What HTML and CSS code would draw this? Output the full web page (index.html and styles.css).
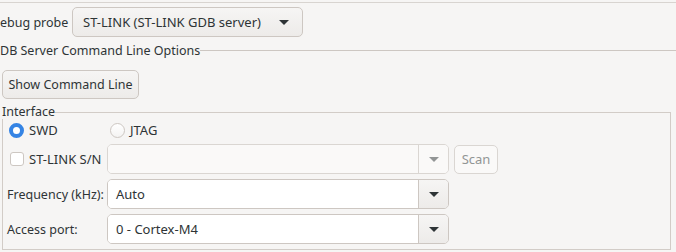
FILE: index.html
```html
<!DOCTYPE html>
<html lang="en">
<head>
<meta charset="utf-8"/>
<title>Debugger</title>
<link rel="stylesheet" href="styles.css">
</head>
<body>
<div class="panel">
  <div class="probe-row">
    <span class="label probe-label">ebug probe</span>
    <div class="combo probe-combo">
      <span class="combo-text">ST-LINK (ST-LINK GDB server)</span>
      <span class="arrow"></span>
    </div>
  </div>
  <div class="section-title"><span>DB Server Command Line Options</span></div>
  <button class="btn show-btn">Show Command Line</button>
  <fieldset class="group">
    <legend>Interface</legend>
    <div class="radio-row">
      <label class="radio checked"><span class="dot"></span>SWD</label>
      <label class="radio"><span class="dot"></span>JTAG</label>
    </div>
    <div class="form-row sn-row">
      <label class="check"><span class="box"></span>ST-LINK S/N</label>
      <div class="entry-combo disabled">
        <span class="entry"></span>
        <span class="drop"><span class="arrow"></span></span>
      </div>
      <button class="btn scan-btn" disabled>Scan</button>
    </div>
    <div class="form-row">
      <span class="label field-label">Frequency (kHz):</span>
      <div class="entry-combo">
        <span class="entry">Auto</span>
        <span class="drop"><span class="arrow"></span></span>
      </div>
    </div>
    <div class="form-row">
      <span class="label field-label">Access port:</span>
      <div class="entry-combo">
        <span class="entry">0 - Cortex-M4</span>
        <span class="drop"><span class="arrow"></span></span>
      </div>
    </div>
  </fieldset>
</div>
</body>
</html>
```

FILE: styles.css
```css
body {
  margin: 0;
  padding: 0;
  background-color: #f6f5f4;
  font-family: 'Noto Sans', 'Open Sans', sans-serif;
  font-size: 12.5px;
  color: #2e3436;
}
.panel {
  width: 676px;
  height: 250px;
  overflow: hidden;
  border-top: 1px solid #d8d4d0;
  margin-top: 2px;
}
.probe-row {
  display: flex;
  align-items: center;
  margin-top: 4px;
  height: 30px;
}
.probe-label {
  width: 72px;
}
.combo {
  display: flex;
  align-items: center;
  justify-content: space-between;
  box-sizing: border-box;
  height: 30px;
  width: 231px;
  padding: 0 13px 0 10px;
  border: 1px solid #cdc7c2;
  border-radius: 5px;
  background: linear-gradient(#f6f5f4, #edebe9);
}
.combo-text {
  font-size: 13px;
}
.arrow {
  width: 0;
  height: 0;
  border-left: 5px solid transparent;
  border-right: 5px solid transparent;
  border-top: 5px solid #2e3436;
}
.section-title {
  display: flex;
  align-items: center;
  height: 22px;
  margin-top: 2px;
}
.section-title::after {
  content: "";
  flex: 1;
  border-top: 1px solid #cdc7c2;
}
.btn {
  font-family: inherit;
  font-size: 12.5px;
  color: #2e3436;
  box-sizing: border-box;
  height: 29px;
  border: 1px solid #cdc7c2;
  border-radius: 5px;
  background: linear-gradient(#f6f5f4, #edebe9);
  padding: 0;
  white-space: nowrap;
}
.show-btn {
  display: block;
  margin: 9px 0 0 2px;
  width: 137px;
}
.group {
  margin: 6px 5px 0 2px;
  padding: 0 0 4px 4px;
  border: 1px solid #d2ccc7;
  height: 145px;
  box-sizing: border-box;
  min-width: 0;
}
.group legend {
  padding: 0;
  margin-left: -5px;
  line-height: 14px;
}
.radio-row {
  display: flex;
  align-items: center;
  height: 20px;
  margin-top: 1px;
  padding-left: 2px;
}
.radio {
  display: flex;
  align-items: center;
  gap: 5px;
  width: 101px;
  font-size: 13px;
}
.radio .dot {
  box-sizing: border-box;
  width: 15px;
  height: 15px;
  border-radius: 50%;
  border: 1px solid #cdc7c2;
  background: linear-gradient(#ffffff, #f4f3f2);
}
.radio.checked .dot {
  border: 4px solid #3584e4;
  background: #ffffff;
}
.form-row {
  display: flex;
  align-items: center;
  height: 30px;
  margin-top: 5px;
}
.form-row.sn-row {
  margin-top: 4px;
}
.check {
  display: flex;
  align-items: center;
  gap: 5px;
  width: 97px;
  margin-left: 3px;
  font-size: 13px;
}
.check .box {
  box-sizing: border-box;
  width: 14px;
  height: 14px;
  border: 1px solid #cdc7c2;
  border-radius: 3px;
  background: #ffffff;
}
.field-label {
  width: 100px;
}
.entry-combo {
  display: flex;
  box-sizing: border-box;
  width: 342px;
  height: 30px;
  border: 1px solid #cdc7c2;
  border-radius: 5px;
  overflow: hidden;
}
.entry {
  flex: 1;
  display: flex;
  align-items: center;
  padding-left: 8px;
  background: #ffffff;
  font-size: 13px;
}
.drop {
  display: flex;
  align-items: center;
  justify-content: center;
  width: 29px;
  border-left: 1px solid #cdc7c2;
  background: linear-gradient(#f6f5f4, #edebe9);
}
.entry-combo.disabled .entry,
.entry-combo.disabled .drop {
  background: #faf9f8;
}
.entry-combo.disabled .drop {
  border-left-color: #dad6d2;
}
.entry-combo.disabled {
  border-color: #dad6d2;
}
.entry-combo.disabled .arrow {
  border-top-color: #929595;
}
.scan-btn {
  margin-left: 5px;
  width: 44px;
  color: #929595;
  background: #faf9f8;
  border-color: #dad6d2;
  font-size: 13px;
}
```
